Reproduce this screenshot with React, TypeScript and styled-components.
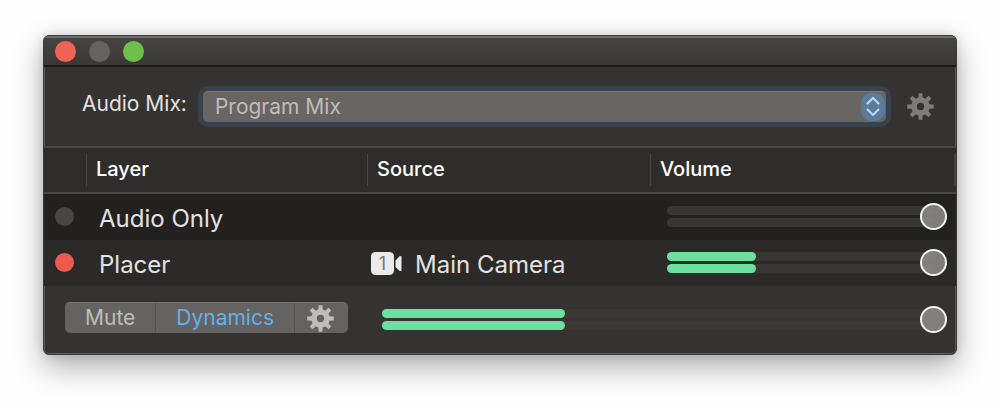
import React, { useState } from "react";
import styled, { createGlobalStyle } from "styled-components";

const GlobalStyle = createGlobalStyle`
  * { box-sizing: border-box; }
  body {
    margin: 0;
    background: #fefefe;
    font-family: Inter, "Liberation Sans", sans-serif;
    font-size: 21px;
    line-height: 24px;
    color: #e4e2e0;
  }
  button, select, input { font: inherit; color: inherit; margin: 0; }
`;

const Desktop = styled.main`
  padding: 35px 43px 50px;
`;

const Panel = styled.section`
  border: 1px solid #3c3d3d;
  border-radius: 6px;
  background: #353331;
  overflow: hidden;
  box-shadow: inset 0 0 0 1px #5a5958, 0 12px 30px rgba(0, 0, 0, 0.32), 0 0 12px rgba(0, 0, 0, 0.12);
`;

const TitleBar = styled.header`
  display: flex;
  align-items: center;
  gap: 13px;
  height: 31px;
  padding: 0 11px;
  background: linear-gradient(#464544, #3a3837);
  border-top: 2px solid #6c6d6b;
  border-bottom: 2px solid #1b1a19;
`;

const WindowButton = styled.button<{ $color: string }>`
  width: 21px;
  height: 21px;
  padding: 0;
  border: 0;
  border-radius: 50%;
  background: ${(p) => p.$color};
`;

const MixBar = styled.div`
  display: flex;
  align-items: center;
  height: 79px;
  padding: 0 22px 0 38px;
`;

const MixLabel = styled.label`
  padding-bottom: 6px;
  margin-right: 16px;
`;

const SelectFrame = styled.div`
  flex: 1;
  display: grid;
  align-items: center;
`;

const MixSelect = styled.select`
  grid-area: 1 / 1;
  appearance: none;
  width: 100%;
  height: 31px;
  padding: 0 32px 0 12px;
  border: 0;
  border-top: 1px solid #6f7d92;
  border-radius: 5px;
  outline: 0;
  background: #696563;
  color: #bfbcba;
  box-shadow: 0 0 0 5px #37424d;
`;

const Stepper = styled.svg`
  grid-area: 1 / 1;
  justify-self: end;
  pointer-events: none;
`;

const IconButton = styled.button`
  display: flex;
  margin-left: 21px;
  padding: 0;
  border: 0;
  background: none;
  color: #7f7c7a;
`;

const LayerTable = styled.table`
  width: 100%;
  table-layout: fixed;
  border-collapse: separate;
  border-spacing: 0;
  border-top: 2px solid #484645;
`;

const HeadCell = styled.th`
  height: 46px;
  padding: 0;
  border-bottom: 2px solid #4a4847;
  background: #2f2d2c;
  color: #ffffff;
  font-size: 20px;
  font-weight: 500;
  text-align: left;
`;

const HeadLabel = styled.div<{ $last?: boolean }>`
  height: 32px;
  padding: 3px 9px;
  border-left: 1px solid #4b4948;
  border-right: ${(p) => (p.$last ? "2px solid #454342" : "0")};
`;

const LayerRow = styled.tr<{ $shade: string }>`
  background: ${(p) => p.$shade};
`;

const Cell = styled.td`
  height: 46px;
  padding: 0;
  font-size: 24px;
`;

const NameCell = styled(Cell)`
  padding: 3px 0 0 13px;
`;

const VolumeCell = styled(Cell)`
  padding: 0 9px 2px 17px;
`;

const StatusCell = styled(Cell)`
  padding: 0 0 2px 11px;
`;

const Status = styled.span<{ $live: boolean }>`
  display: block;
  width: 19px;
  height: 19px;
  border-radius: 50%;
  background: ${(p) => (p.$live ? "#ec5a4e" : "#484645")};
`;

const Source = styled.div`
  display: flex;
  align-items: center;
  gap: 13px;
  padding-left: 4px;
`;

const SourceName = styled.span`
  padding-top: 3px;
`;

const FaderBox = styled.div`
  flex: 1;
  display: grid;
  align-items: center;
`;

const Meter = styled.div`
  grid-area: 1 / 1;
  display: grid;
  gap: 3px;
  margin-right: 11px;
`;

const Channel = styled.div<{ $track: string }>`
  height: 9px;
  border-radius: 5px;
  background: ${(p) => p.$track};
`;

const Level = styled.div`
  height: 100%;
  border-radius: 5px;
  background: #6ce0a0;
`;

const Slider = styled.input`
  grid-area: 1 / 1;
  appearance: none;
  width: 100%;
  height: 27px;
  background: transparent;
  outline: 0;

  &::-webkit-slider-thumb {
    appearance: none;
    width: 27px;
    height: 27px;
    border: 2px solid #f6f5f4;
    border-radius: 50%;
    background: rgba(140, 138, 136, 0.88);
  }
`;

const Footer = styled.footer`
  display: flex;
  align-items: flex-end;
  gap: 34px;
  padding: 16px 9px 21px 21px;
`;

const Segments = styled.div`
  display: flex;
  height: 31px;
  border-radius: 5px;
  overflow: hidden;
  background: #656361;
  border-top: 1px solid #757371;
`;

const Segment = styled.button<{ $on?: boolean }>`
  display: flex;
  align-items: center;
  justify-content: center;
  padding: 0 20px;
  border: 0;
  background: none;
  color: ${(p) => (p.$on ? "#62b0ec" : "#bfbdbb")};

  & + & { border-left: 1px solid #565452; }
  &:last-child { padding: 0 14px 0 12px; }
`;

function Gear() {
  return (
    <svg width="27" height="27" viewBox="0 0 27 27" aria-hidden="true">
      <circle cx="13.5" cy="13.5" r="6.5" fill="none" stroke="currentColor" strokeWidth="5.6" />
      {[0, 45, 90, 135, 180, 225, 270, 315].map((a) => (
        <path key={a} d="M11.3 5.5 11.6 0.2h3.8l.3 5.3z" fill="currentColor" transform={`rotate(${a} 13.5 13.5)`} />
      ))}
    </svg>
  );
}

function CameraIcon() {
  return (
    <svg width="31" height="23" viewBox="0 0 31 23" aria-hidden="true">
      <rect width="23" height="23" rx="4.5" fill="#eceae8" />
      <path d="M24.5 8.5 28.5 4.2Q30.5 3.4 30.5 5V18Q30.5 19.6 28.5 18.8L24.5 15z" fill="#eceae8" />
      <text x="11.5" y="18" textAnchor="middle" fontSize="18" fill="#7b7977">1</text>
    </svg>
  );
}

function Fader({ label, level, track }: { label: string; level: number; track: string }) {
  const [gain, setGain] = useState(100);
  return (
    <FaderBox>
      <Meter>
        {["left", "right"].map((side) => (
          <Channel key={side} $track={track}>
            <Level style={{ width: `${level}%` }} />
          </Channel>
        ))}
      </Meter>
      <Slider type="range" aria-label={label} value={gain} onChange={(e) => setGain(Number(e.target.value))} />
    </FaderBox>
  );
}

const layers = [
  { name: "Audio Only", source: "", live: false, level: 0, shade: "#232120" },
  { name: "Placer", source: "Main Camera", live: true, level: 33, shade: "#2c2a29" },
];

export default function App() {
  return (
    <>
      <GlobalStyle />
      <Desktop>
        <Panel>
          <TitleBar>
            <WindowButton $color="#ee6558" aria-label="Close" />
            <WindowButton $color="#656262" aria-label="Minimize" />
            <WindowButton $color="#6fc04a" aria-label="Zoom" />
          </TitleBar>
          <MixBar>
            <MixLabel htmlFor="mix">Audio Mix:</MixLabel>
            <SelectFrame>
              <MixSelect id="mix">
                <option>Program Mix</option>
              </MixSelect>
              <Stepper width="25" height="31" viewBox="0 0 25 31" aria-hidden="true">
                <rect x="0" y="2" width="24" height="28" rx="10" fill="#5b7b9b" />
                <path d="M6.5 12.5 12 7l5.500 5.500M6.500 18.500 12 24l5.500-5.500" fill="none" stroke="#bcd6f2" strokeWidth="2.200" strokeLinecap="round" strokeLinejoin="round" />
              </Stepper>
            </SelectFrame>
            <IconButton aria-label="Mix settings">
              <Gear />
            </IconButton>
          </MixBar>
          <LayerTable>
            <colgroup>
              <col style={{ width: 42 }} />
              <col style={{ width: 281 }} />
              <col style={{ width: 283 }} />
              <col />
            </colgroup>
            <thead>
              <tr>
                <HeadCell aria-label="Status" />
                <HeadCell><HeadLabel>Layer</HeadLabel></HeadCell>
                <HeadCell><HeadLabel>Source</HeadLabel></HeadCell>
                <HeadCell><HeadLabel $last>Volume</HeadLabel></HeadCell>
              </tr>
            </thead>
            <tbody>
              {layers.map((l) => (
                <LayerRow key={l.name} $shade={l.shade}>
                  <StatusCell><Status $live={l.live} /></StatusCell>
                  <NameCell>{l.name}</NameCell>
                  <Cell>
                    {l.source && (
                      <Source>
                        <CameraIcon />
                        <SourceName>{l.source}</SourceName>
                      </Source>
                    )}
                  </Cell>
                  <VolumeCell><Fader label={`${l.name} volume`} level={l.level} track="#393736" /></VolumeCell>
                </LayerRow>
              ))}
            </tbody>
          </LayerTable>
          <Footer>
            <Segments>
              <Segment>Mute</Segment>
              <Segment $on>Dynamics</Segment>
              <Segment aria-label="Output settings"><Gear /></Segment>
            </Segments>
            <Fader label="Master volume" level={33} track="#3a3937" />
          </Footer>
        </Panel>
      </Desktop>
    </>
  );
}
